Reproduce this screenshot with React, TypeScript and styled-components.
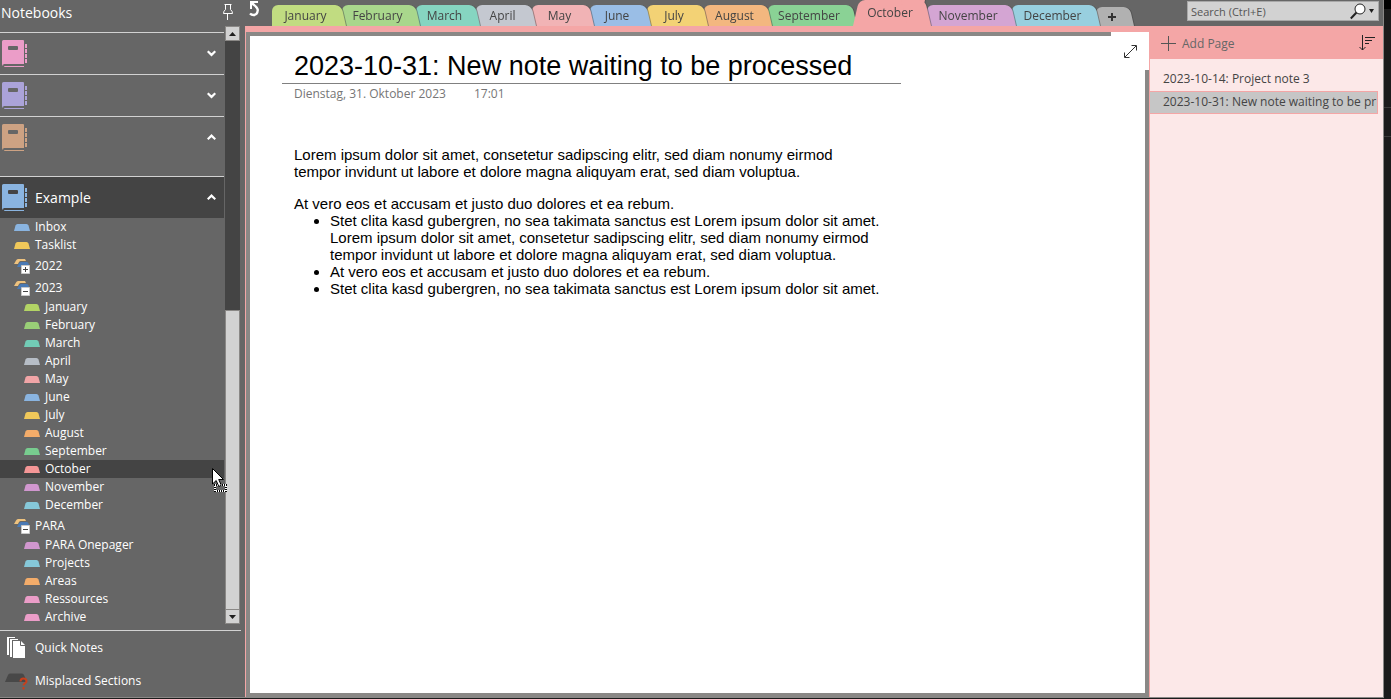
import React from "react";
import styled, { createGlobalStyle, css } from "styled-components";

const UI_FONT = `"Open Sans", "Noto Sans", sans-serif`;
const NOTE_FONT = `"Liberation Sans", Arial, sans-serif`;

const color = {
  chrome: "#666666",
  chromeDark: "#444444",
  light: "#d2d2d2",
  frame: "#8a8886",
  accent: "#f4a6a6",
  accentPale: "#fce8e8",
  ink: "#444444",
};

const GlobalStyle = createGlobalStyle`
  *, *::before, *::after { box-sizing: border-box; }
  body { margin: 0; background: #1b1b1b; font-family: ${UI_FONT}; font-size: 12px; }
  button { font: inherit; color: inherit; border: 0; padding: 0; background: none; cursor: default; }
  ul { list-style: none; margin: 0; padding: 0; }
  a { color: inherit; text-decoration: none; }
  svg { display: block; flex: none; }
`;

const Desktop = styled.div`
  display: flex;
  min-height: 100vh;
  padding: 0 7px 1px 0;
  background: linear-gradient(#000 0 9px, #1b1b1b 9px 107px, #3a3a3a 107px 108px, #1b1b1b 108px 136px, #3a3a3a 136px 137px, #1b1b1b 137px);
`;

const Window = styled.div`
  position: relative;
  flex: 1;
  min-width: 0;
  display: flex;
  background: ${color.chrome};
  border-right: 1px solid ${color.frame};
  border-bottom: 1px solid ${color.frame};
`;

/* ---------- Sidebar ---------- */

const Sidebar = styled.nav`
  flex: none;
  width: 245px;
  display: flex;
  flex-direction: column;
  color: #fff;
`;

const SidebarBody = styled.div`
  flex: 1;
  display: flex;
  gap: 1px;
  width: 240px;
  padding-bottom: 4px;
`;

const SidebarMain = styled.div`
  flex: 1;
`;

const SidebarTitle = styled.h2`
  margin: 0;
  height: 32px;
  padding-left: 1px;
  font-size: 14px;
  font-weight: 400;
  line-height: 26px;
`;

const Notebook = styled.button<{ $tall?: boolean; $active?: boolean }>`
  display: flex;
  align-items: flex-start;
  width: 100%;
  height: ${(p) => (p.$tall ? 60 : 42)}px;
  padding: 6px 8px 0 2px;
  border-top: 1px solid ${color.light};
  background: ${(p) => (p.$active ? color.chromeDark : "transparent")};
  text-align: left;
`;

const NotebookName = styled.span`
  flex: 1;
  padding-left: 8px;
  font-size: 14px;
  line-height: 29px;
`;

const ChevronBox = styled.span`
  padding-top: 11px;
`;

const TreeRow = styled.a<{ $level: number; $group?: boolean; $active?: boolean }>`
  display: flex;
  align-items: center;
  gap: 5px;
  height: ${(p) => (p.$group ? 22 : 18)}px;
  padding-top: ${(p) => (p.$group ? 2 : 0)}px;
  padding-left: ${(p) => (p.$level === 1 ? 14 : 24)}px;
  background: ${(p) => (p.$active ? color.chromeDark : "transparent")};
  line-height: 18px;
  white-space: nowrap;
`;

const ScrollColumn = styled.div`
  width: 15px;
  display: flex;
  flex-direction: column;
  padding-bottom: 2px;
`;

const PinButton = styled.button`
  height: 26px;
  margin-left: -2px;
  padding-top: 4px;
  display: flex;
  align-items: flex-start;
`;

const ScrollTrack = styled.div`
  flex: 1;
  display: flex;
  flex-direction: column;
  background: ${color.chromeDark};
`;

const ScrollButton = styled.button`
  height: 15px;
  display: grid;
  place-items: center;
  background: ${color.light};
  border: 1px solid ${color.frame};
`;

const ScrollSpace = styled.div`
  flex: 269;
`;

const ScrollThumb = styled.div`
  flex: 299;
  background: ${color.light};
  border: 1px solid ${color.frame};
  border-bottom: 0;
`;

const SidebarFooter = styled.div`
  width: 241px;
  border-top: 1px solid ${color.light};
`;

const FooterLink = styled.a`
  display: flex;
  align-items: center;
  height: 33px;
`;

const FooterIcon = styled.span`
  width: 35px;
  padding-left: 5px;
`;

/* ---------- Top bar ---------- */

const Workspace = styled.main`
  flex: 1;
  min-width: 0;
  display: flex;
  flex-direction: column;
`;

const TopBar = styled.header`
  display: flex;
  align-items: flex-start;
  height: 26px;
  padding: 0 4px 0 3px;
`;

const UndoButton = styled.button`
  width: 24px;
`;

const Tabs = styled.div`
  flex: 1;
  display: flex;
  align-items: flex-end;
  height: 26px;
  isolation: isolate;
`;

const Tab = styled.button<{ $color: string; $width: number; $order: number; $kind?: "active" | "add" }>`
  position: relative;
  z-index: ${(p) => p.$order};
  flex: none;
  width: ${(p) => p.$width}px;
  height: ${(p) => (p.$kind === "active" ? 26 : p.$kind === "add" ? 19 : 21)}px;
  margin-right: -4px;
  padding-right: 7px;
  color: ${color.ink};
  line-height: 20px;
  white-space: nowrap;
  filter: drop-shadow(1px 0 0 rgba(60, 60, 60, 0.45));

  &::before,
  &::after {
    content: "";
    position: absolute;
    z-index: -1;
    top: 0;
    bottom: 0;
    background: ${(p) => p.$color};
  }
  &::before {
    left: 0;
    right: 12px;
    border-radius: 6px 0 0 0;
  }
  &::after {
    right: 0;
    width: 24px;
    border-radius: 0 6px 0 0;
    transform: skewX(13deg);
    transform-origin: bottom;
  }
  ${(p) =>
    p.$kind === "active" &&
    css`
      padding-right: 4px;
      line-height: 26px;
      &::before {
        transform: skewX(-13deg);
        transform-origin: bottom;
      }
    `}
`;

const TabLabel = styled.span`
  display: grid;
  justify-content: center;
  align-items: center;
  height: 100%;
`;

const SearchBox = styled.label`
  flex: none;
  display: flex;
  align-items: center;
  width: 192px;
  height: 20px;
  margin-top: 1px;
  padding: 0 4px 0 3px;
  gap: 3px;
  background: ${color.light};
  border: 1px solid #a8a8a8;
`;

const SearchInput = styled.input`
  flex: 1;
  min-width: 0;
  padding: 0;
  border: 0;
  outline: 0;
  background: none;
  font: 11px ${UI_FONT};
  color: ${color.ink};
  &::placeholder {
    color: #555;
    opacity: 1;
  }
`;

/* ---------- Note and page list ---------- */

const Content = styled.div`
  flex: 1;
  display: flex;
  border-top: 6px solid ${color.accent};
  border-left: 1px solid ${color.accent};
`;

const Canvas = styled.article`
  position: relative;
  flex: 1;
  min-width: 0;
  padding: 14px 32px;
  background: #fff;
  border: 4px solid ${color.frame};
  color: #000;
  font-family: ${NOTE_FONT};
  font-size: 15px;
  line-height: 17px;
`;

const ExpandButton = styled.button`
  position: absolute;
  top: -4px;
  right: -4px;
  width: 38px;
  height: 38px;
  display: grid;
  place-items: center;
  background: #fff;
`;

const NoteTitle = styled.h1`
  margin: 0;
  max-width: 619px;
  padding: 1px 12px;
  border-bottom: 1px solid #808080;
  font-size: 27px;
  font-weight: 400;
  line-height: 31px;
`;

const NoteMeta = styled.div`
  display: flex;
  gap: 28px;
  padding: 1px 12px 0;
  font-family: ${UI_FONT};
  font-size: 12px;
  line-height: 18px;
  color: #767676;
`;

const NoteBody = styled.div`
  max-width: 640px;
  padding: 43px 12px 0;
`;

const Paragraph = styled.p`
  margin: 0;
  & + & {
    margin-top: 15px;
  }
`;

const Bullets = styled.ul`
  list-style: disc;
  padding-left: 36px;
`;

const PagePanel = styled.aside`
  flex: none;
  width: 234px;
  background: ${color.accentPale};
  border-left: 1px solid ${color.accent};
  color: ${color.ink};
`;

const PageHeader = styled.div`
  display: flex;
  align-items: flex-start;
  justify-content: space-between;
  height: 27px;
  padding: 3px 8px 0 11px;
  background: ${color.accent};
`;

const AddPage = styled.button`
  display: flex;
  align-items: center;
  gap: 6px;
  color: #666;
`;

const PageList = styled.ul`
  padding: 9px 5px 0 0;
`;

const PageLink = styled.a<{ $active?: boolean }>`
  display: block;
  height: 23px;
  margin-left: -1px;
  padding: 0 0 0 13px;
  border: 1px solid ${(p) => (p.$active ? color.accent : "transparent")};
  border-left-color: ${color.accent};
  background: ${(p) => (p.$active ? "#c6c6c6" : "transparent")};
  line-height: 20px;
  white-space: nowrap;
  overflow: hidden;
`;

const Pointer = styled.svg`
  position: absolute;
  left: 212px;
  top: 468px;
`;

/* ---------- Icons ---------- */

const NotebookIcon = ({ fill, slot }: { fill: string; slot: string }) => (
  <svg width="25" height="29" viewBox="0 0 25 29" fill={fill} aria-hidden="true">
    <path d="M1.500 1H21q1 0 1 1v23H2q-1 0-1 2-1-1-1-2V2.500Q0 1 1.500 1z" />
    <path d="M2 27h20v1H3q-1 0-1-1zM23 5h2v4h-2zM23 10h2v4h-2zM23 15h2v4h-2zM23 20h2v4h-2z" />
    <rect x="6" y="7" width="10" height="4" rx="1" fill={slot} />
  </svg>
);

const Chevron = ({ up }: { up?: boolean }) => (
  <svg width="9" height="7" viewBox="0 0 9 7" fill="none" stroke="#fff" strokeWidth="2.200" aria-hidden="true">
    <path d={up ? "M.7 5.300 4.500 1.600l3.800 3.700" : "M.7 1.200 4.500 4.900l3.800-3.700"} />
  </svg>
);

const SectionIcon = ({ fill }: { fill: string }) => (
  <svg width="16" height="7" viewBox="0 0 16 7" aria-hidden="true">
    <path d="M0 7 1.500 1.500Q2 0 3.500 0h9q1.500 0 2 1.500L16 7z" fill={fill} />
  </svg>
);

const GroupIcon = ({ open }: { open?: boolean }) => (
  <svg width="16" height="15" viewBox="0 0 16 15" aria-hidden="true">
    <path d="M0 5 2 1.500Q2.700 0 4 0h7l1 2H6.500Q5 2 4 5z" fill="#eec27e" />
    <path d="M3 8 5 4.500Q5.700 3 7 3h6q1.500 0 2 3H7v2z" fill="#4a7ab5" />
    <path d="M7.500 6.500h8v8h-8z" fill="#fff" stroke="#c8c8c8" />
    <path d={open ? "M9 10.500h5" : "M9 10.500h5M11.500 8v5"} stroke="#444" />
  </svg>
);

const PinIcon = () => (
  <svg width="10" height="16" viewBox="0 0 10 16" fill="none" stroke="#fff" aria-hidden="true">
    <path d="M1.500.5h7M2.500 1v4.500Q.5 7 .5 9.500h9Q9.500 7 7.500 5.500V1M4.500 10v6" />
  </svg>
);

const UndoIcon = () => (
  <svg width="12" height="17" viewBox="0 0 12 17" aria-hidden="true">
    <path d="M2 1h8v2H6.500L4 5v4H2z" fill="#fff" />
    <path d="M4 3.500q5.500 3.500 5.800 6.500-.5 5-4.300 5-2 0-3.500-1.500" fill="none" stroke="#fff" strokeWidth="2.400" />
  </svg>
);

const QuickNotesIcon = () => (
  <svg width="22" height="24" viewBox="0 0 22 24" aria-hidden="true">
    <path d="M2 1h8v1H4v17H2zM5 3h8v1H7v17H5z" fill="#fff" />
    <path d="M8 5h8l4 4v13H8z" fill="#fff" />
    <path d="M15.500 5v4.500H20" fill="none" stroke="#666" />
  </svg>
);

const MisplacedIcon = () => (
  <svg width="24" height="18" viewBox="0 0 24 18" aria-hidden="true">
    <path d="M0 10 3 3q.6-1.500 2-1.500h12Q18.500 1.500 19 3l3 7z" fill="#484848" />
    <path d="M15.500 9.500q0-3 3-3t3 2.700c0 2-3 2.300-3 4.300M18.500 15v2.500" fill="none" stroke="#c8401c" strokeWidth="2" />
  </svg>
);

const SearchIcon = () => (
  <svg width="16" height="17" viewBox="0 0 16 17" fill="none" stroke="#222" aria-hidden="true">
    <circle cx="10" cy="6" r="5" fill="#fff" />
    <path d="M6.500 9.500.8 15.500" strokeWidth="2" />
  </svg>
);

const Triangle = ({ up, w = 7 }: { up?: boolean; w?: number }) => (
  <svg width={w} height="4" viewBox="0 0 8 4" preserveAspectRatio="none" fill="#1e1e1e" aria-hidden="true">
    <path d={up ? "M0 4 4 0l4 4z" : "M0 0h8L4 4z"} />
  </svg>
);

const ExpandIcon = () => (
  <svg width="13" height="13" viewBox="0 0 13 13" fill="none" stroke="#333" aria-hidden="true">
    <path d="M1 12 12 1M7.500.5h5v5M.5 7.500v5h5" />
  </svg>
);

const PlusIcon = () => (
  <svg width="15" height="15" viewBox="0 0 15 15" stroke="#555" aria-hidden="true">
    <path d="M7.500 0v15M0 7.500h15" />
  </svg>
);

const SortIcon = () => (
  <svg width="16" height="16" viewBox="0 0 16 16" fill="none" stroke="#222" aria-hidden="true">
    <path d="M3.500 0v15M.5 12l3 3 3-3M6 2.500h10M6 5.500h7M6 8.500h4" />
  </svg>
);

/* ---------- Data ---------- */

const notebooks = [
  { id: "pink", fill: "#eb9dc8", up: false },
  { id: "violet", fill: "#aba3d9", up: false },
  { id: "tan", fill: "#cda283", up: true },
];

type Node = { name: string; level: 1 | 2; fill?: string; open?: boolean };

const tree: Node[] = [
  { name: "Inbox", level: 1, fill: "#8ab4e0" },
  { name: "Tasklist", level: 1, fill: "#f0c85a" },
  { name: "2022", level: 1, open: false },
  { name: "2023", level: 1, open: true },
  { name: "January", level: 2, fill: "#b3d465" },
  { name: "February", level: 2, fill: "#99cf77" },
  { name: "March", level: 2, fill: "#72ccb6" },
  { name: "April", level: 2, fill: "#b6bdc6" },
  { name: "May", level: 2, fill: "#f1a5a7" },
  { name: "June", level: 2, fill: "#8ab4e0" },
  { name: "July", level: 2, fill: "#f0c85a" },
  { name: "August", level: 2, fill: "#f3ac6a" },
  { name: "September", level: 2, fill: "#78cc8f" },
  { name: "October", level: 2, fill: "#f49696" },
  { name: "November", level: 2, fill: "#d197cf" },
  { name: "December", level: 2, fill: "#86c8d9" },
  { name: "PARA", level: 1, open: true },
  { name: "PARA Onepager", level: 2, fill: "#d197cf" },
  { name: "Projects", level: 2, fill: "#86c8d9" },
  { name: "Areas", level: 2, fill: "#f3ac6a" },
  { name: "Ressources", level: 2, fill: "#eb9dc8" },
  { name: "Archive", level: 2, fill: "#eb9dc8" },
];

const tabs = [
  { name: "January", width: 74, fill: "#c1dc81" },
  { name: "February", width: 78, fill: "#a9d78c" },
  { name: "March", width: 64, fill: "#86d5c1" },
  { name: "April", width: 60, fill: "#c4c8d0" },
  { name: "May", width: 62, fill: "#f1b3b5" },
  { name: "June", width: 61, fill: "#9abee6" },
  { name: "July", width: 61, fill: "#f3d275" },
  { name: "August", width: 68, fill: "#f3b77f" },
  { name: "September", width: 89, fill: "#8ad295" },
  { name: "October", width: 78, fill: color.accent },
  { name: "November", width: 89, fill: "#d4a5d3" },
  { name: "December", width: 88, fill: "#98cfdf" },
];

export default function App() {
  return (
    <>
      <GlobalStyle />
      <Desktop>
        <Window>
          <Sidebar aria-label="Notebooks">
            <SidebarBody>
              <SidebarMain>
                <SidebarTitle>Notebooks</SidebarTitle>
                {notebooks.map((n) => (
                  <Notebook key={n.id} $tall={n.up} aria-expanded={n.up} aria-label="Notebook">
                    <NotebookIcon fill={n.fill} slot={color.chrome} />
                    <NotebookName />
                    <ChevronBox>
                      <Chevron up={n.up} />
                    </ChevronBox>
                  </Notebook>
                ))}
                <Notebook $active aria-expanded>
                  <NotebookIcon fill="#8ab4e0" slot={color.chromeDark} />
                  <NotebookName>Example</NotebookName>
                  <ChevronBox>
                    <Chevron up />
                  </ChevronBox>
                </Notebook>
                <ul>
                  {tree.map((n) => (
                    <li key={n.name}>
                      <TreeRow href="#" $level={n.level} $group={!n.fill} $active={n.name === "October"}>
                        {n.fill ? <SectionIcon fill={n.fill} /> : <GroupIcon open={n.open} />}
                        {n.name}
                      </TreeRow>
                    </li>
                  ))}
                </ul>
              </SidebarMain>
              <ScrollColumn>
                <PinButton aria-label="Pin">
                  <PinIcon />
                </PinButton>
                <ScrollTrack>
                  <ScrollButton aria-label="Scroll up">
                    <Triangle up />
                  </ScrollButton>
                  <ScrollSpace />
                  <ScrollThumb />
                  <ScrollButton aria-label="Scroll down">
                    <Triangle />
                  </ScrollButton>
                </ScrollTrack>
              </ScrollColumn>
            </SidebarBody>
            <SidebarFooter>
              <FooterLink href="#">
                <FooterIcon>
                  <QuickNotesIcon />
                </FooterIcon>
                Quick Notes
              </FooterLink>
              <FooterLink href="#">
                <FooterIcon>
                  <MisplacedIcon />
                </FooterIcon>
                Misplaced Sections
              </FooterLink>
            </SidebarFooter>
          </Sidebar>

          <Workspace>
            <TopBar>
              <UndoButton aria-label="Back">
                <UndoIcon />
              </UndoButton>
              <Tabs>
                {tabs.map((t, i) => (
                  <Tab
                    key={t.name}
                    $color={t.fill}
                    $width={t.width}
                    $order={t.name === "October" ? 20 : 15 - i}
                    $kind={t.name === "October" ? "active" : undefined}
                  >
                    <TabLabel>{t.name}</TabLabel>
                  </Tab>
                ))}
                <Tab $color="#b1b1b1" $width={38} $order={1} $kind="add" aria-label="New section">
                  <TabLabel>
                    <svg width="8" height="8" viewBox="0 0 8 8" stroke="#333" strokeWidth="2" aria-hidden="true">
                      <path d="M4 0v8M0 4h8" />
                    </svg>
                  </TabLabel>
                </Tab>
              </Tabs>
              <SearchBox>
                <SearchInput aria-label="Search" placeholder="Search (Ctrl+E)" />
                <SearchIcon />
                <Triangle w={5} />
              </SearchBox>
            </TopBar>
            <Content>
              <Canvas>
                <ExpandButton aria-label="Full page view">
                  <ExpandIcon />
                </ExpandButton>
                <NoteTitle>2023-10-31: New note waiting to be processed</NoteTitle>
                <NoteMeta>
                  <span>Dienstag, 31. Oktober 2023</span>
                  <span>17:01</span>
                </NoteMeta>
                <NoteBody>
                  <Paragraph>
                    Lorem ipsum dolor sit amet, consetetur sadipscing elitr, sed diam nonumy eirmod
                    <br />
                    tempor invidunt ut labore et dolore magna aliquyam erat, sed diam voluptua.
                  </Paragraph>
                  <Paragraph>At vero eos et accusam et justo duo dolores et ea rebum.</Paragraph>
                  <Bullets>
                    <li>
                      Stet clita kasd gubergren, no sea takimata sanctus est Lorem ipsum dolor sit amet.
                      <br />
                      Lorem ipsum dolor sit amet, consetetur sadipscing elitr, sed diam nonumy eirmod
                      <br />
                      tempor invidunt ut labore et dolore magna aliquyam erat, sed diam voluptua.
                    </li>
                    <li>At vero eos et accusam et justo duo dolores et ea rebum.</li>
                    <li>Stet clita kasd gubergren, no sea takimata sanctus est Lorem ipsum dolor sit amet.</li>
                  </Bullets>
                </NoteBody>
              </Canvas>
              <PagePanel>
                <PageHeader>
                  <AddPage>
                    <PlusIcon />
                    Add Page
                  </AddPage>
                  <button aria-label="Sort pages">
                    <SortIcon />
                  </button>
                </PageHeader>
                <PageList>
                  <li>
                    <PageLink href="#">2023-10-14: Project note 3</PageLink>
                  </li>
                  <li>
                    <PageLink href="#" $active>
                      2023-10-31: New note waiting to be pr
                    </PageLink>
                  </li>
                </PageList>
              </PagePanel>
            </Content>
          </Workspace>

          <Pointer width="16" height="25" viewBox="0 0 16 25" aria-hidden="true">
            <path d="M3 17h11v6H3z" fill="none" stroke="#000" strokeWidth="2" />
            <path d="M3 17h11v6H3z" fill="none" stroke="#fff" strokeWidth="2" strokeDasharray="1 1" />
            <path d="M.5.5v15.500l3.700-3.500 2.600 6 2.500-1.200-2.600-5.800h4.800z" fill="#fff" stroke="#000" />
          </Pointer>
        </Window>
      </Desktop>
    </>
  );
}
